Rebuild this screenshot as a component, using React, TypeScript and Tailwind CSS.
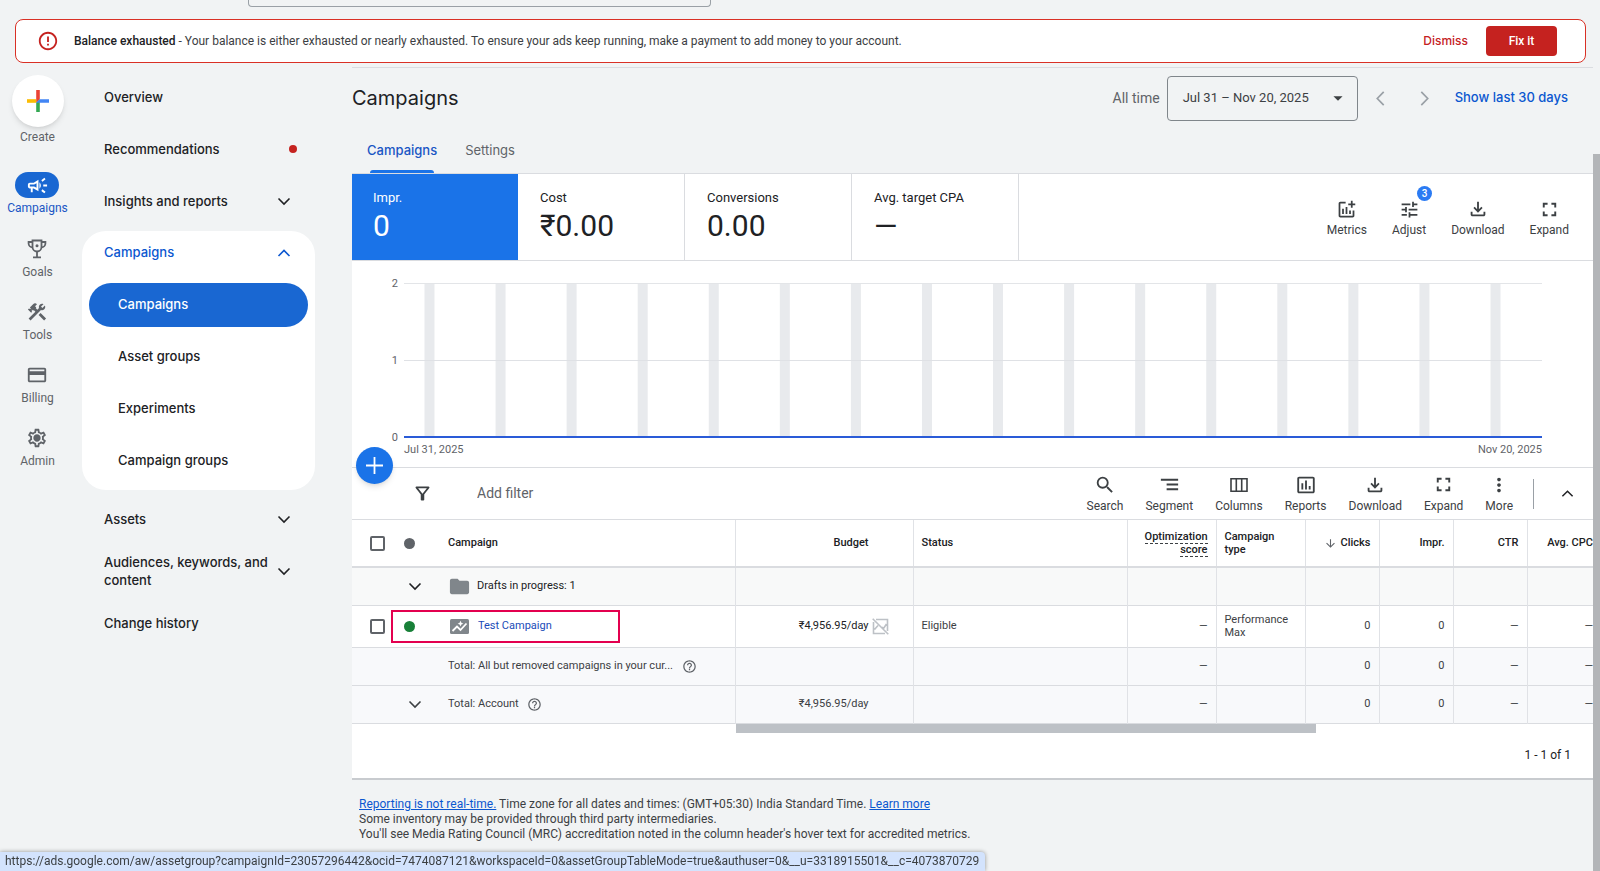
import type { ReactNode } from 'react';
import {
  MdArrowDownward,
  MdArrowDropDown,
  MdConstruction,
  MdFolder,
  MdFullscreen,
  MdHelpOutline,
  MdInsertChartOutlined,
  MdMoreVert,
  MdOutlineAddchart,
  MdOutlineCampaign,
  MdOutlineCreditCard,
  MdOutlineErrorOutline,
  MdOutlineFileDownload,
  MdOutlineFilterAlt,
  MdOutlineSettings,
  MdSearch,
  MdSegment,
  MdTune,
} from 'react-icons/md';

const bars = Array.from({ length: 16 }, (_, i) => 1.8 + i * 6.245);

function Chevron({ dir, size = 14 }: { dir: 'up' | 'down' | 'left' | 'right'; size?: number }) {
  const paths = {
    up: 'M1.5 10 7 4.5l5.5 5.5',
    down: 'M1.5 4.5 7 10l5.5-5.5',
    left: 'M10 .8 4 7l6 6.2',
    right: 'M4 .8 10 7l-6 6.2',
  };
  return (
    <svg width={size} height={size} viewBox="0 0 14 14" fill="none" stroke="currentColor" strokeWidth="1.6">
      <path d={paths[dir]} />
    </svg>
  );
}

function TrophyIcon() {
  return (
    <svg width="20" height="20" viewBox="0 0 20 20" fill="none" stroke="currentColor" strokeWidth="1.8">
      <path d="M5.5 1.5h9V8a4.5 4.5 0 0 1-9 0z" />
      <path d="M5.5 3H1.6v1.5A4 4 0 0 0 5.5 8.4M14.5 3h3.9v1.5a4 4 0 0 1-3.9 3.9M10 12.5v6M6 18.4h8" />
      <circle cx="10" cy="6.8" r="1.5" fill="currentColor" stroke="none" />
    </svg>
  );
}

function GearIcon() {
  return (
    <svg width="22" height="22" viewBox="0 0 24 24">
      <MdOutlineSettings size={24} />
      <circle cx="12" cy="12" r="3" fill="currentColor" />
    </svg>
  );
}

function ColumnsIcon() {
  return (
    <svg width="20" height="20" viewBox="0 0 20 20" fill="none" stroke="currentColor" strokeWidth="1.6">
      <path d="M2 3.8h16v12.4H2zM7.3 4v12M12.7 4v12" />
    </svg>
  );
}

function PerformanceIcon() {
  return (
    <svg width="19" height="15" viewBox="0 0 19 15">
      <rect width="19" height="15" rx="1.5" fill="#80868b" />
      <path d="M2.5 12 7 7.5l3.5 3.5 6-6.5" fill="none" stroke="#fff" strokeWidth="1.8" />
      <path d="m10.5 1.8.9 2 2 .9-2 .9-.9 2-.9-2-2-.9 2-.9z" fill="#fff" />
    </svg>
  );
}

function NoChartIcon() {
  return (
    <svg width="17" height="17" viewBox="0 0 17 17" fill="none" stroke="#bdc1c6" strokeWidth="1.6">
      <path d="M4 1.5h11.5V13M1.5 4v11.5H13M.7.7l15.6 15.6M2.5 11.5 6 7.5M10 9l1.5 1.5L14.5 6" />
    </svg>
  );
}

function CreateIcon() {
  return (
    <svg width="22" height="22" viewBox="0 0 22 22">
      <path d="M9.2 0h3.6v9.2L9.2 12.8z" fill="#ea4335" />
      <path d="M0 9.2h9.2v3.6H0z" fill="#fbbc04" />
      <path d="M9.2 12.8 12.8 9.2V22H9.2z" fill="#34a853" />
      <path d="M12.8 9.2H22v3.6H9.2z" fill="#4285f4" />
    </svg>
  );
}

const rail = [
  { label: 'Goals', icon: <TrophyIcon /> },
  { label: 'Tools', icon: <MdConstruction size={22} /> },
  { label: 'Billing', icon: <MdOutlineCreditCard size={22} /> },
  { label: 'Admin', icon: <GearIcon /> },
];

function NavItem({ label, chevron, children }: { label: string; chevron?: 'up' | 'down'; children?: ReactNode }) {
  return (
    <a href="#" className="flex h-[52px] items-center justify-between pr-6 pl-[22px] leading-[18px]">
      <span className="w-[168px]">{label}</span>
      {chevron && <Chevron dir={chevron} />}
      {children}
    </a>
  );
}

function Tool({ label, icon, badge }: { label: string; icon: ReactNode; badge?: string }) {
  return (
    <button className="relative flex flex-col items-center gap-[2px] text-[12px] leading-4 text-[#3c4043]">
      <span className="flex h-[22px] items-center">{icon}</span>
      {label}
      {badge && (
        <span className="absolute -top-3 right-[-6px] flex size-[15px] items-center justify-center rounded-full bg-[#2b7bf3] text-[10px] font-medium text-white">
          {badge}
        </span>
      )}
    </button>
  );
}

function Metric({ label, value, active }: { label: string; value: string; active?: boolean }) {
  return (
    <button
      className={
        active
          ? 'flex w-[166px] flex-col items-start bg-[#1a73e8] px-[21px] pt-4 text-white'
          : 'flex w-[167px] flex-col items-start border-r border-[#dadce0] px-[22px] pt-4 text-[#202124]'
      }
    >
      <span className="text-[13px] leading-4">{label}</span>
      <span className="text-[30px] leading-10">{value}</span>
    </button>
  );
}

// Dash and zero cells shared by the campaign row and both total rows.
function Stats({ type }: { type?: string }) {
  return (
    <>
      <td className="pr-2 text-right">—</td>
      <td className="pl-2 leading-[13px]">{type}</td>
      <td className="pr-2 text-right">0</td>
      <td className="pr-2 text-right">0</td>
      <td className="pr-2 text-right">—</td>
      <td className="text-right">—</td>
    </>
  );
}

function Sidebar() {
  return (
    <nav className="w-[233px] shrink-0 pt-2 font-[Inter,sans-serif] text-[13px] font-medium text-[#202124]">
      <NavItem label="Overview" />
      <NavItem label="Recommendations">
        <span className="mr-[-6px] size-2 rounded-full bg-[#c5221f]" />
      </NavItem>
      <NavItem label="Insights and reports" chevron="down" />
      <div className="mt-1 mb-[3px] rounded-[24px] bg-white pb-[7px]">
        <a href="#" className="flex h-11 items-center justify-between pr-6 pl-[22px] text-[#0b57d0]">
          Campaigns
          <Chevron dir="up" />
        </a>
        <div className="mx-[7px] mt-2 flex flex-col gap-2">
          <a href="#" className="flex h-11 items-center rounded-full bg-[#1967d2] pl-[29px] text-white">
            Campaigns
          </a>
          <a href="#" className="flex h-11 items-center pl-[29px]">
            Asset groups
          </a>
          <a href="#" className="flex h-11 items-center pl-[29px]">
            Experiments
          </a>
          <a href="#" className="flex h-11 items-center pl-[29px]">
            Campaign groups
          </a>
        </div>
      </div>
      <NavItem label="Assets" chevron="down" />
      <NavItem label="Audiences, keywords, and content" chevron="down" />
      <NavItem label="Change history" />
    </nav>
  );
}

function Chart() {
  return (
    <div className="pt-4 pr-[51px] pl-8">
      <div className="flex gap-[6px]">
        <div className="-mb-[6px] flex w-[14px] flex-col justify-between text-right text-[11px] leading-[14px] text-[#5f6368]">
          <span>2</span>
          <span>1</span>
          <span>0</span>
        </div>
        <svg className="mt-[6px] h-[156px] min-w-0 flex-1">
          <rect y="0" width="100%" height="1" fill="#e3e5e8" />
          {bars.map((x) => (
            <rect key={x} x={`${x}%`} y="1" width="10" height="152" fill="#e8eaed" />
          ))}
          <rect y="77" width="100%" height="1" fill="#dfe1e5" />
          <rect y="153" width="100%" height="2" fill="#2a5bd7" />
        </svg>
      </div>
      <div className="mt-[3px] flex justify-between pl-5 text-[11px] leading-4 text-[#5f6368]">
        <span>Jul 31, 2025</span>
        <span>Nov 20, 2025</span>
      </div>
    </div>
  );
}

function CampaignTable() {
  return (
    <table className="w-full table-fixed text-left text-[11px] text-[#3c4043] [&_td+td]:border-l [&_td+td]:border-[#e0e2e6] [&_th+th]:border-l [&_th+th]:border-[#e0e2e6]">
      <colgroup>
        <col className="w-[383px]" />
        <col className="w-[178px]" />
        <col />
        <col className="w-[89px]" />
        <col className="w-[89px]" />
        <col className="w-[74px]" />
        <col className="w-[74px]" />
        <col className="w-[74px]" />
        <col className="w-[66px]" />
      </colgroup>
      <thead>
        <tr className="h-[47px] border-b-2 border-[#dadce0] text-[#202124] [&>th]:font-medium">
          <th>
            <div className="flex items-center pl-[18px]">
              <input
                type="checkbox"
                aria-label="Select all campaigns"
                className="size-[15px] appearance-none rounded-[2px] border-2 border-[#5f6368]"
              />
              <span className="ml-[19px] size-[11px] rounded-full bg-[#5f6368]" />
              <span className="ml-[33px]">Campaign</span>
            </div>
          </th>
          <th className="pr-[44px] text-right">Budget</th>
          <th className="pl-2">Status</th>
          <th className="pr-2 text-right leading-[13px]">
            <span className="border-b border-dashed border-[#3c4043]">Optimization score</span>
          </th>
          <th className="pr-6 pl-2 leading-[13px]">Campaign type</th>
          <th className="pr-2">
            <span className="flex items-center justify-end gap-1">
              <MdArrowDownward size={13} color="#5f6368" />
              Clicks
            </span>
          </th>
          <th className="pr-2 text-right">Impr.</th>
          <th className="pr-2 text-right">CTR</th>
          <th className="text-right whitespace-nowrap">Avg. CPC</th>
        </tr>
      </thead>
      <tbody>
        <tr className="h-[38px] border-b border-[#dadce0] bg-[#f8f9f9]">
          <td>
            <button className="flex items-center pl-[56px] text-[#202124]">
              <Chevron dir="down" />
              <MdFolder size={23} color="#80868b" className="mr-[6px] ml-[26px]" />
              Drafts in progress: 1
            </button>
          </td>
          <td />
          <td />
          <td />
          <td />
          <td />
          <td />
          <td />
          <td />
        </tr>
        <tr className="h-[42px] border-b border-[#dadce0]">
          <td>
            <div className="flex items-center pl-[18px]">
              <input
                type="checkbox"
                aria-label="Select Test Campaign"
                className="size-[15px] appearance-none rounded-[2px] border-2 border-[#5f6368]"
              />
              <div className="ml-[6px] flex h-[33px] w-[229px] items-center border-2 border-[#e3004f] pl-[11px]">
                <span className="mr-[35px] size-[11px] rounded-full bg-[#188038]" />
                <PerformanceIcon />
                <a href="#" className="ml-[9px] text-[#1a4bb8]">
                  Test Campaign
                </a>
              </div>
            </div>
          </td>
          <td>
            <span className="flex items-center justify-end gap-[3px] pr-6 text-[#202124]">
              ₹4,956.95/day
              <NoChartIcon />
            </span>
          </td>
          <td className="pl-2">Eligible</td>
          <Stats type="Performance Max" />
        </tr>
        <tr className="h-[38px] border-b border-[#dadce0] bg-[#f8f9fb]">
          <td>
            <span className="flex items-center gap-[9px] pl-[96px]">
              Total: All but removed campaigns in your cur...
              <MdHelpOutline size={15} color="#5f6368" />
            </span>
          </td>
          <td />
          <td />
          <Stats />
        </tr>
        <tr className="h-[38px] border-b border-[#dadce0] bg-[#f8f9fb]">
          <td>
            <span className="flex items-center pl-[56px]">
              <Chevron dir="down" />
              <span className="mr-2 ml-[26px]">Total: Account</span>
              <MdHelpOutline size={15} color="#5f6368" />
            </span>
          </td>
          <td className="pr-[44px] text-right">₹4,956.95/day</td>
          <td />
          <Stats />
        </tr>
      </tbody>
    </table>
  );
}

export default function App() {
  return (
    <div className="flex min-h-screen bg-[#f1f3f4] font-[Roboto,sans-serif] text-[#202124]">
      <div className="min-w-0 flex-1">
        <div className="ml-[248px] h-[7px] w-[463px] rounded-b border border-t-0 border-[#9aa0a6]" />
        <div className="mt-3 mr-[7px] ml-[15px] flex h-11 items-center rounded-lg border border-[#d93025] bg-white pr-7 pl-[21px] text-[12px]">
          <MdOutlineErrorOutline size={22} color="#c5221f" />
          <p className="ml-[15px] flex-1 text-[#3c4043]">
            <span className="font-medium text-[#202124]">Balance exhausted</span> - Your balance is either exhausted or
            nearly exhausted. To ensure your ads keep running, make a payment to add money to your account.
          </p>
          <button className="mr-[18px] font-[Inter,sans-serif] font-medium text-[#c5221f]">Dismiss</button>
          <button className="h-[30px] w-[71px] rounded bg-[#c5221f] font-medium text-white">Fix it</button>
        </div>

        <div className="flex">
          <aside className="mr-[7px] flex w-[75px] shrink-0 flex-col items-center pt-3 text-[12px] leading-4 text-[#5f6368]">
            <button className="flex flex-col items-center gap-[2px]">
              <span className="flex size-[52px] items-center justify-center rounded-full bg-white shadow-md">
                <CreateIcon />
              </span>
              Create
            </button>
            <a href="#" className="mt-[27px] flex flex-col items-center gap-[2px] text-[#1a56c4]">
              <span className="flex h-[26px] w-11 items-center justify-center rounded-full bg-[#1967d2] text-white">
                <MdOutlineCampaign size={23} />
              </span>
              Campaigns
            </a>
            <div className="mt-[21px] flex flex-col gap-[20px]">
              {rail.map((item) => (
                <a key={item.label} href="#" className="flex h-[43px] flex-col items-center justify-between">
                  <span className="flex h-6 items-center">{item.icon}</span>
                  {item.label}
                </a>
              ))}
            </div>
          </aside>

          <Sidebar />

          <main className="mt-[4px] ml-[37px] min-w-0 flex-1 border-t border-[#dadce0]">
            <div className="flex h-[60px] items-center pr-[25px]">
              <h1 className="flex-1 font-[Inter,sans-serif] text-[20px]">Campaigns</h1>
              <label htmlFor="range" className="mr-[7px] text-[14px] text-[#5f6368]">
                All time
              </label>
              <button
                id="range"
                className="flex h-[45px] w-[191px] items-center justify-between rounded border border-[#80868b] pr-2 pl-[15px] text-[13px] text-[#3c4043]"
              >
                Jul 31 – Nov 20, 2025
                <MdArrowDropDown size={22} />
              </button>
              <button aria-label="Previous period" className="ml-[15px] text-[#9aa0a6]">
                <Chevron dir="left" size={15} />
              </button>
              <button aria-label="Next period" className="mr-[23px] ml-[29px] text-[#9aa0a6]">
                <Chevron dir="right" size={15} />
              </button>
              <a href="#" className="font-[Inter,sans-serif] text-[13px] font-medium text-[#0b57d0]">
                Show last 30 days
              </a>
            </div>

            <div className="flex h-[46px] items-end gap-[28px] border-b border-[#dadce0] pl-[15px] font-[Inter,sans-serif] text-[13px] leading-5">
              <button className="flex flex-col items-center gap-[10px] font-medium text-[#1a56c4]">
                Campaigns
                <span className="h-[3px] w-16 rounded-t bg-[#1a73e8]" />
              </button>
              <button className="pb-[13px] text-[#5f6368]">Settings</button>
            </div>

            <section className="border-b-2 border-[#c8cbcf] bg-white">
              <div className="flex h-[87px] border-b border-[#dadce0]">
                <Metric label="Impr." value="0" active />
                <Metric label="Cost" value="₹0.00" />
                <Metric label="Conversions" value="0.00" />
                <Metric label="Avg. target CPA" value="—" />
                <div className="flex flex-1 items-start justify-end gap-[25px] pt-6 pr-6">
                  <Tool label="Metrics" icon={<MdOutlineAddchart size={21} />} />
                  <Tool label="Adjust" icon={<MdTune size={21} />} badge="3" />
                  <Tool label="Download" icon={<MdOutlineFileDownload size={22} />} />
                  <Tool label="Expand" icon={<MdFullscreen size={23} />} />
                </div>
              </div>

              <Chart />

              <div className="relative mt-[9px] flex h-[53px] items-center border-y border-[#dadce0] pr-[19px] pl-[60px]">
                <button
                  aria-label="New campaign"
                  className="absolute top-[-21px] left-1 flex size-[37px] items-center justify-center rounded-full bg-[#1a73e8] shadow-md"
                >
                  <svg width="17" height="17" viewBox="0 0 17 17" stroke="#fff" strokeWidth="1.8">
                    <path d="M8.5 0v17M0 8.5h17" />
                  </svg>
                </button>
                <MdOutlineFilterAlt size={21} color="#3c4043" />
                <input
                  aria-label="Add filter"
                  placeholder="Add filter"
                  className="ml-[44px] min-w-0 flex-1 text-[14px] outline-none placeholder:text-[#5f6368]"
                />
                <div className="flex items-center gap-[22px]">
                  <Tool label="Search" icon={<MdSearch size={22} />} />
                  <Tool label="Segment" icon={<MdSegment size={23} />} />
                  <Tool label="Columns" icon={<ColumnsIcon />} />
                  <Tool label="Reports" icon={<MdInsertChartOutlined size={22} />} />
                  <Tool label="Download" icon={<MdOutlineFileDownload size={22} />} />
                  <Tool label="Expand" icon={<MdFullscreen size={23} />} />
                  <Tool label="More" icon={<MdMoreVert size={22} />} />
                </div>
                <span className="mr-[27px] ml-5 h-[30px] w-px bg-[#9aa0a6]" />
                <button aria-label="Collapse chart">
                  <Chevron dir="up" size={13} />
                </button>
              </div>

              <CampaignTable />

              <div className="ml-[384px] h-[9px] w-[580px] bg-[#bdc1c6]" />
              <p className="pt-[14px] pr-[22px] pb-[15px] text-right text-[12px] leading-4">1 - 1 of 1</p>
            </section>

            <footer className="px-[7px] pt-[17px] text-[12px] leading-[15px] text-[#3c4043]">
              <p>
                <a href="#" className="text-[#0b57d0] underline">
                  Reporting is not real-time.
                </a>{' '}
                Time zone for all dates and times: (GMT+05:30) India Standard Time.{' '}
                <a href="#" className="text-[#0b57d0] underline">
                  Learn more
                </a>
              </p>
              <p>Some inventory may be provided through third party intermediaries.</p>
              <p>You'll see Media Rating Council (MRC) accreditation noted in the column header's hover text for accredited metrics.</p>
            </footer>
          </main>
        </div>
      </div>

      <div className="flex w-[7px] shrink-0 pt-[154px]">
        <div className="flex-1 bg-[#b3b5b8]" />
      </div>

      {/* browser link preview */}
      <div className="fixed bottom-0 left-0 rounded-tr bg-[#d3e3fd] pr-[6px] pl-[5px] text-[12px] leading-[19px] text-[#3c4043] shadow-[0_0_4px_rgba(0,0,0,0.4)]">
        https://ads.google.com/aw/assetgroup?campaignId=23057296442&ocid=7474087121&workspaceId=0&assetGroupTableMode=true&authuser=0&__u=3318915501&__c=4073870729
      </div>
    </div>
  );
}
